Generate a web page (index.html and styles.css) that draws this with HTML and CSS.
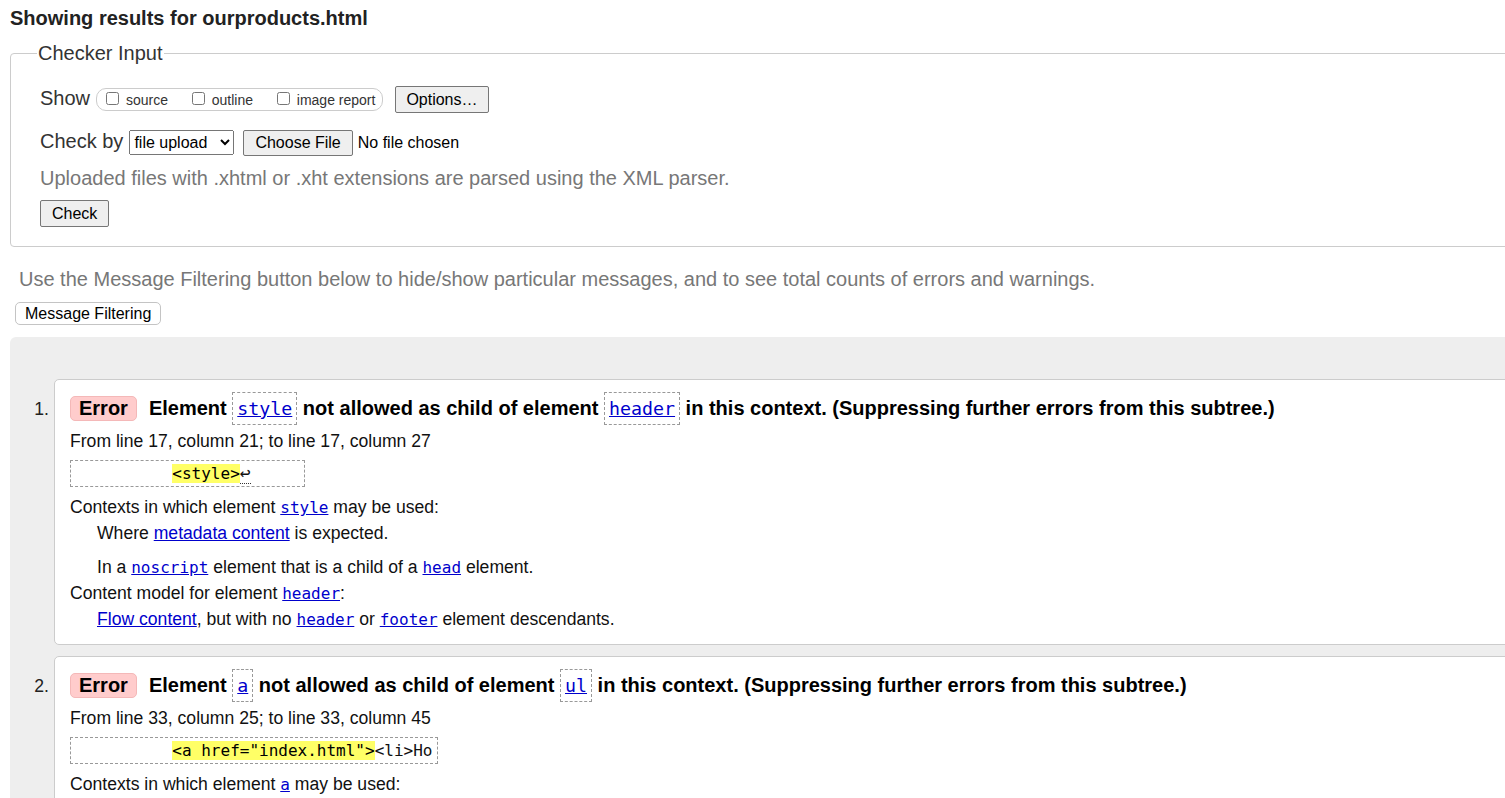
FILE: index.html
```html
<!DOCTYPE html>
<html lang="en">
<head>
<meta charset="utf-8">
<title>Showing results for ourproducts.html - Nu Html Checker</title>
<link rel="stylesheet" href="styles.css">
</head>
<body>
<h2 class="results-title">Showing results for ourproducts.html</h2>
<form class="checker-form">
  <fieldset class="checker-input">
    <legend class="checker-legend">Checker Input</legend>
    <div class="row">
      <span class="row-label">Show</span>
      <span class="show-pill">
        <label class="show-opt"><input type="checkbox"> source</label>
        <label class="show-opt"><input type="checkbox"> outline</label>
        <label class="show-opt"><input type="checkbox"> image report</label>
      </span>
      <button type="button" class="btn btn-options">Options…</button>
    </div>
    <div class="row row-checkby">
      <span class="row-label">Check by</span>
      <select class="select"><option>file upload</option><option>address</option><option>text input</option></select>
      <button type="button" class="btn btn-file">Choose File</button>
      <span class="file-status">No file chosen</span>
    </div>
    <p class="hint">Uploaded files with .xhtml or .xht extensions are parsed using the XML parser.</p>
    <div class="row row-submit"><button type="button" class="btn btn-check">Check</button></div>
  </fieldset>
</form>
<p class="filter-hint">Use the Message Filtering button below to hide/show particular messages, and to see total counts of errors and warnings.</p>
<button type="button" class="btn-filter">Message Filtering</button>
<div class="results">
  <ol class="messages">
    <li class="message">
      <span class="msg-num">1.</span>
      <div class="card">
        <p class="msg-title"><strong class="badge">Error</strong><span>Element <code class="chip"><a href="#">style</a></code> not allowed as child of element <code class="chip"><a href="#">header</a></code> in this context. (Suppressing further errors from this subtree.)</span></p>
        <p class="location">From line 17, column 21; to line 17, column 27</p>
        <div class="extract"><code>          <mark class="hl">&lt;style&gt;</mark><span class="lf">↩</span>     </code></div>
        <dl class="details">
          <dt>Contexts in which element <a href="#"><code class="ic">style</code></a> may be used:</dt>
          <dd>
            <p>Where <a href="#">metadata content</a> is expected.</p>
            <p class="gap">In a <a href="#"><code class="ic">noscript</code></a> element that is a child of a <a href="#"><code class="ic">head</code></a> element.</p>
          </dd>
          <dt>Content model for element <a href="#"><code class="ic">header</code></a>:</dt>
          <dd><p><a href="#">Flow content</a>, but with no <a href="#"><code class="ic">header</code></a> or <a href="#"><code class="ic">footer</code></a> element descendants.</p></dd>
        </dl>
      </div>
    </li>
    <li class="message">
      <span class="msg-num">2.</span>
      <div class="card">
        <p class="msg-title"><strong class="badge">Error</strong><span>Element <code class="chip"><a href="#">a</a></code> not allowed as child of element <code class="chip"><a href="#">ul</a></code> in this context. (Suppressing further errors from this subtree.)</span></p>
        <p class="location">From line 33, column 25; to line 33, column 45</p>
        <div class="extract"><code>          <mark class="hl">&lt;a href="index.html"&gt;</mark>&lt;li&gt;Ho</code></div>
        <dl class="details">
          <dt>Contexts in which element <a href="#"><code class="ic">a</code></a> may be used:</dt>
          <dd><p>Where <a href="#">phrasing content</a> is expected.</p></dd>
          <dt>Content model for element <a href="#"><code class="ic">ul</code></a>:</dt>
          <dd><p>Zero or more <a href="#"><code class="ic">li</code></a> and <a href="#">script-supporting elements</a>.</p></dd>
        </dl>
      </div>
    </li>
  </ol>
</div>
</body>
</html>
```
FILE: styles.css
```css
html {
  overflow: hidden;
}

body {
  margin: 0;
  padding: 0 0 40px 10px;
  width: 1700px;
  font-family: "Liberation Sans", Arial, sans-serif;
  color: #222;
  background: #fff;
}

.results-title {
  margin: 0;
  padding-top: 7px;
  font-size: 20px;
  line-height: 23px;
  font-weight: bold;
  color: #222;
}

.checker-form {
  margin: 0;
}

.checker-input {
  margin: 12px 0 0 0;
  padding: 21px 10px 19px 29px;
  border: 1px solid #ccc;
  border-radius: 4px;
  min-width: 0;
}

.checker-legend {
  margin-left: -3px;
  padding: 0 1px;
  font-size: 20px;
  line-height: 23px;
  color: #333;
}

.row {
  display: flex;
  align-items: baseline;
}

.row-checkby {
  margin-top: 17px;
}

.row-submit {
  margin-top: 10px;
}

.row-label {
  font-size: 20px;
  color: #333;
  margin-right: 6px;
}

.show-pill {
  display: inline-block;
  border: 1px solid #ccc;
  border-radius: 10px;
  padding: 0 7px 0 5px;
  font-size: 14px;
  line-height: 20px;
  color: #333;
}

.show-opt + .show-opt {
  margin-left: 16px;
}

.show-opt input {
  margin: 3px 3px 3px 4px;
}

.btn {
  box-sizing: border-box;
  height: 27px;
  padding: 0 11px;
  font-family: "Liberation Sans", Arial, sans-serif;
  font-size: 16px;
  color: #000;
  background: #efefef;
  border: 1px solid #767676;
  border-radius: 2px;
}

.btn-options {
  margin-left: 12px;
  padding: 0 10px;
}

.btn-file {
  height: 26px;
  margin-left: 9px;
}

.select {
  box-sizing: border-box;
  width: 105px;
  height: 25px;
  margin: 0;
  font-family: "Liberation Sans", Arial, sans-serif;
  font-size: 16px;
  color: #000;
}

.file-status {
  margin-left: 5px;
  font-size: 16px;
  color: #000;
}

.hint {
  margin: 11px 0 0;
  font-size: 20px;
  line-height: 23px;
  color: #777;
}

.filter-hint {
  margin: 21px 0 0;
  padding-left: 9px;
  font-size: 20px;
  line-height: 23px;
  color: #777;
}

.btn-filter {
  display: block;
  box-sizing: border-box;
  height: 23px;
  margin: 11px 0 0 5px;
  padding: 0 9px;
  font-family: "Liberation Sans", Arial, sans-serif;
  font-size: 16px;
  color: #000;
  background: #fff;
  border: 1px solid #c4c4c4;
  border-radius: 5px;
}

.results {
  margin-top: 12px;
  padding: 42px 0 40px 0;
  background: #eee;
  border-radius: 6px 0 0 0;
}

.messages {
  list-style: none;
  margin: 0;
  padding: 0;
}

.message {
  display: flex;
  align-items: baseline;
  margin-bottom: 11px;
}

.msg-num {
  flex: 0 0 44px;
  box-sizing: border-box;
  padding-right: 5px;
  text-align: right;
  font-size: 17.6px;
  color: #222;
}

.card {
  flex: 1;
  min-width: 0;
  padding: 12px 15px 12px;
  background: #fff;
  border: 1px solid #ccc;
  border-radius: 5px;
  font-size: 17.6px;
  color: #111;
}

.card a {
  color: #00c;
}

.msg-title {
  margin: 0;
  font-size: 20px;
  line-height: 23px;
  font-weight: bold;
  color: #000;
  white-space: nowrap;
}

.badge {
  display: inline-block;
  margin-right: 12px;
  padding: 0 8px;
  background: #fcc;
  border: 1px solid #f4b8b8;
  border-radius: 5px;
  line-height: 23px;
}

.chip {
  display: inline-block;
  padding: 4px 4px;
  border: 1px dashed #999;
  font-family: "DejaVu Sans Mono", "Liberation Mono", monospace;
  font-size: 18.3px;
  font-weight: normal;
}

.location {
  margin: 3px 0 0;
  line-height: 26px;
}

.extract {
  width: fit-content;
  margin-top: 6px;
  padding: 0 5px;
  border: 1px dashed #999;
  line-height: 24px;
  white-space: pre;
}

.extract code {
  font-family: "DejaVu Sans Mono", "Liberation Mono", monospace;
  font-size: 16px;
}

.hl {
  background: #ff6;
  color: #000;
}

.lf {
  border-bottom: 1px dotted #333;
  font-size: 18px;
  line-height: 1;
}

.details {
  margin: 7px 0 0;
  line-height: 26px;
}

.details dt {
  margin: 0;
}

.details dd {
  margin: 0 0 0 27px;
}

.details dd p {
  margin: 0;
}

.details dd p.gap {
  margin-top: 8px;
}

.ic {
  font-family: "DejaVu Sans Mono", "Liberation Mono", monospace;
  font-size: 16px;
  line-height: 1;
}
```
